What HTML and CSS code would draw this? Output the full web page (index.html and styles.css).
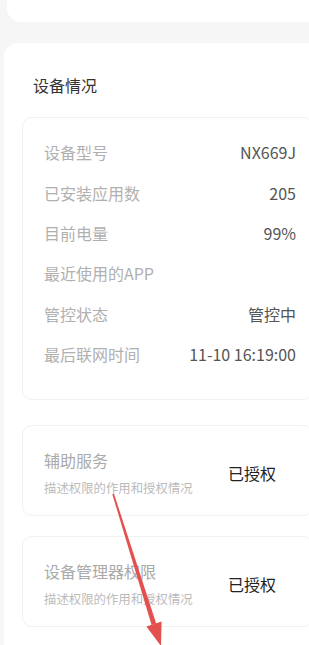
FILE: index.html
```html
<!DOCTYPE html>
<html lang="zh-CN">
<head>
  <meta charset="UTF-8">
  <meta name="viewport" content="width=device-width, initial-scale=1.0">
  <title>设备情况</title>
  <link rel="stylesheet" href="styles.css">
</head>
<body>
  <div class="top-card"></div>

  <div class="section">
    <div class="section-title">设备情况</div>

    <div class="info-box">
      <div class="info-row"><span class="label">设备型号</span><span class="value">NX669J</span></div>
      <div class="info-row"><span class="label">已安装应用数</span><span class="value">205</span></div>
      <div class="info-row"><span class="label">目前电量</span><span class="value">99%</span></div>
      <div class="info-row"><span class="label">最近使用的APP</span><span class="value"></span></div>
      <div class="info-row"><span class="label">管控状态</span><span class="value">管控中</span></div>
      <div class="info-row"><span class="label">最后联网时间</span><span class="value">11-10 16:19:00</span></div>
    </div>

    <div class="perm-card">
      <div class="perm-text">
        <div class="perm-name">辅助服务</div>
        <div class="perm-desc">描述权限的作用和授权情况</div>
      </div>
      <div class="perm-state">已授权</div>
    </div>

    <div class="perm-card">
      <div class="perm-text">
        <div class="perm-name">设备管理器权限</div>
        <div class="perm-desc">描述权限的作用和授权情况</div>
      </div>
      <div class="perm-state">已授权</div>
    </div>
  </div>

  <!-- annotation arrow drawn over the screenshot -->
  <svg class="arrow" width="309" height="645" viewBox="0 0 309 645">
    <polygon points="112.3,494.2 114,493.7 156.2,623.6 151.6,625" fill="#e4504e"/>
    <polygon points="146.4,626.4 161.6,621.6 161,646" fill="#e4504e"/>
  </svg>
</body>
</html>
```

FILE: styles.css
```css
body {
  font-family: "Noto Sans CJK SC", "Noto Sans", sans-serif;
  margin: 0;
  padding: 0;
  background-color: #f6f6f6;
  overflow: hidden;
  height: 645px;
  position: relative;
}

.top-card {
  height: 22px;
  margin-left: 7px;
  margin-right: -20px;
  background-color: #fff;
  border-radius: 0 0 14px 14px;
}

.section {
  margin-top: 21px;
  margin-left: 4px;
  margin-right: -14px;
  padding: 32px 10px 30px 18px;
  background-color: #fff;
  border-radius: 14px 14px 0 0;
}

.section-title {
  font-size: 16px;
  line-height: 20px;
  color: #333;
  padding-left: 11px;
}

.info-box {
  margin-top: 22px;
  padding: 14px 16px 25px 21px;
  border: 1px solid #f1f1f1;
  border-radius: 10px;
}

.info-row {
  display: flex;
  justify-content: space-between;
  align-items: center;
  height: 40.4px;
  font-size: 16px;
}

.label {
  color: #b0b0b0;
}

.value {
  color: #555;
}

.perm-card {
  display: flex;
  align-items: center;
  margin-top: 25px;
  padding: 23px 21px 19px 21px;
  border: 1px solid #f1f1f1;
  border-radius: 10px;
}

.perm-card + .perm-card {
  margin-top: 20px;
}

.perm-text {
  width: 184px;
}

.perm-name {
  font-size: 16px;
  line-height: 22px;
  color: #aaa;
}

.perm-desc {
  margin-top: 9px;
  font-size: 12.4px;
  line-height: 16px;
  color: #bbb;
}

.perm-state {
  font-size: 16px;
  line-height: 20px;
  color: #222;
}

.arrow {
  position: absolute;
  top: 0;
  left: 0;
}
```
